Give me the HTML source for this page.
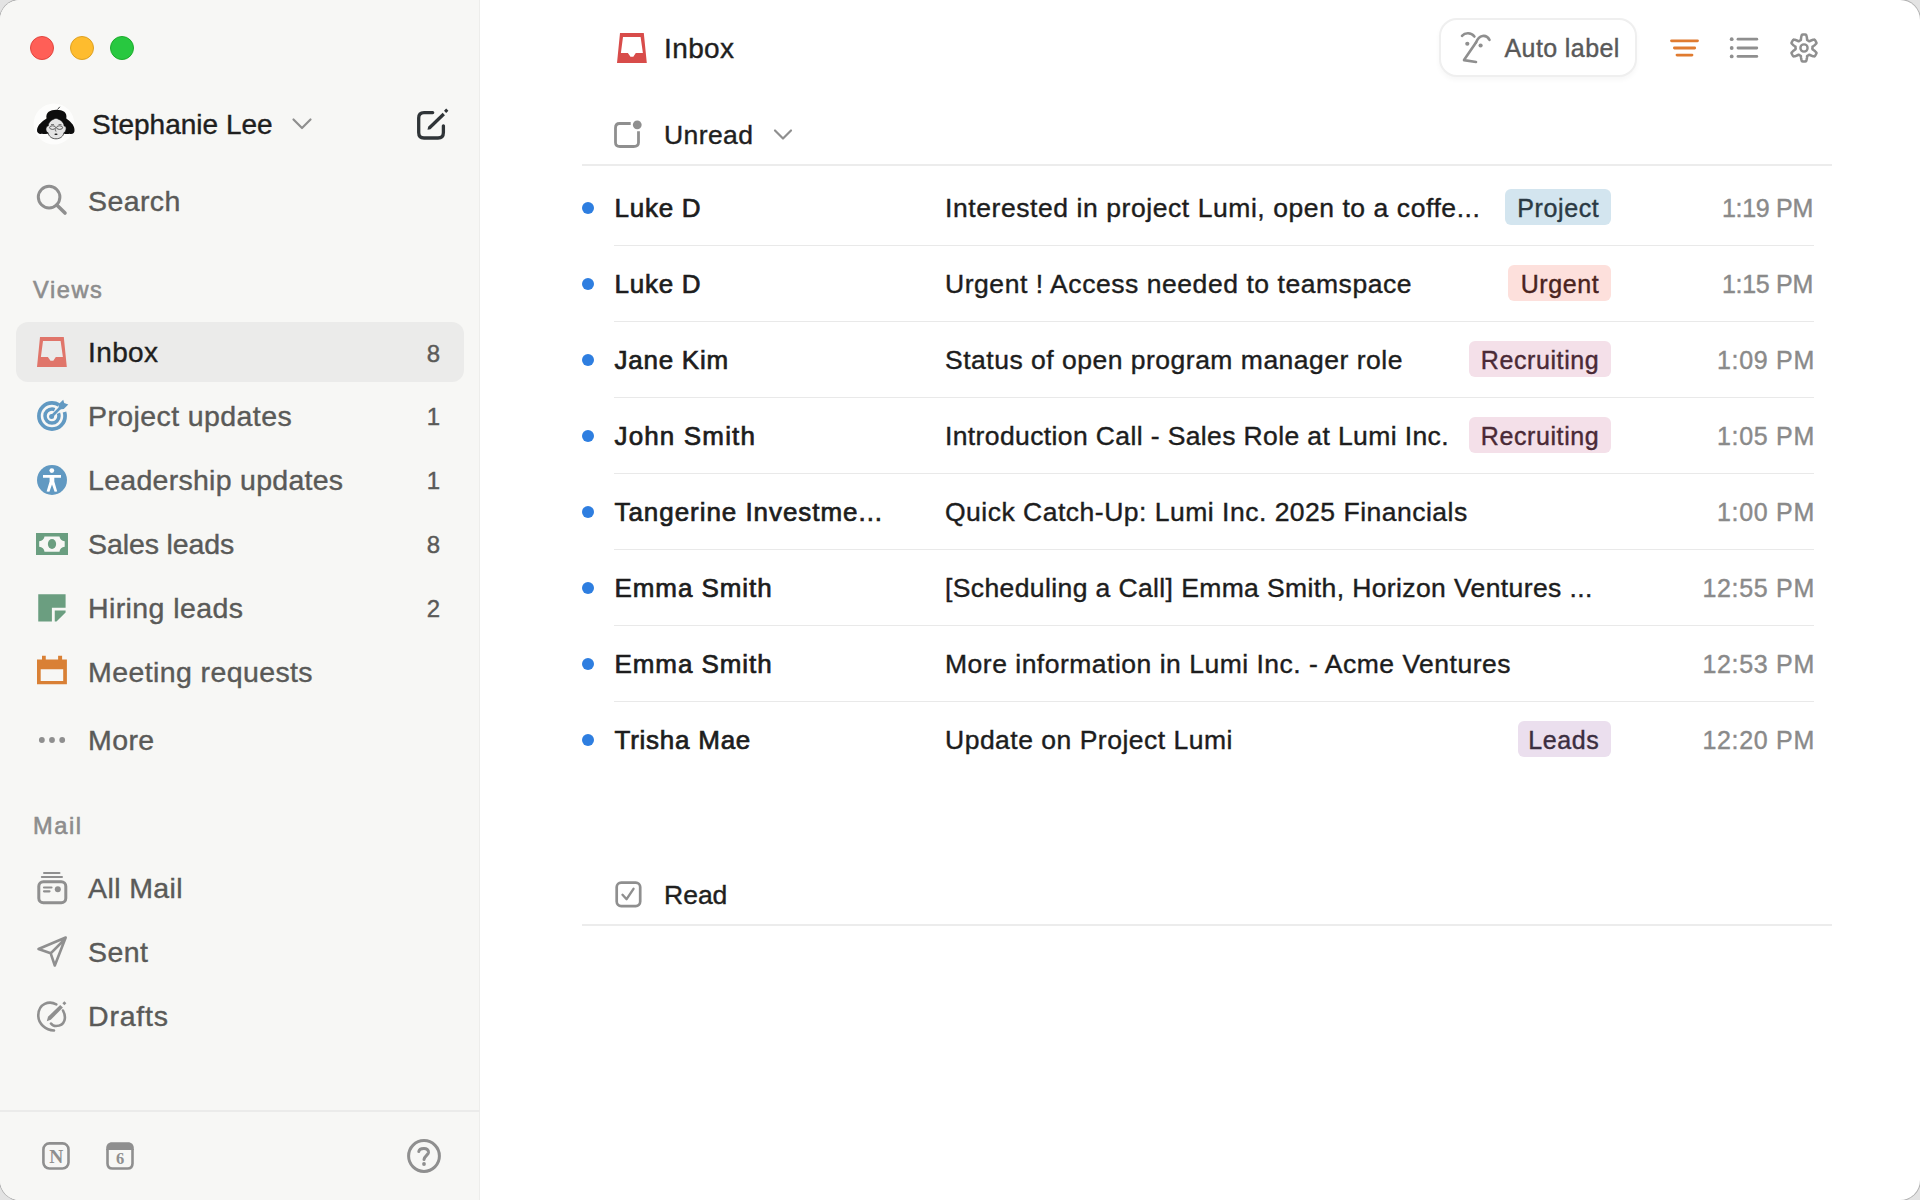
<!DOCTYPE html>
<html><head><meta charset="utf-8"><title>Inbox</title>
<style>
*{margin:0;padding:0;box-sizing:border-box}
html,body{width:1920px;height:1200px;overflow:hidden;background:#e3e3e3}
body{font-family:"Liberation Sans",sans-serif;position:relative}
.win{position:absolute;left:0;top:0;width:1920px;height:1200px;border-radius:20px;overflow:hidden;background:#fff;box-shadow:0 0 0 1px rgba(0,0,0,0.22)}
.side{position:absolute;left:0;top:0;width:480px;height:1200px;background:#f7f7f5;border-right:1px solid #ededeb}
.t{position:absolute;white-space:nowrap}
svg{position:absolute;overflow:visible}
.hl{position:absolute;left:16px;top:322px;width:448px;height:60px;border-radius:12px;background:#ebebea}
.sep{position:absolute;height:2px;background:#ececec}
.tag{position:absolute;height:36px;border-radius:6px}
</style></head><body><div class="win">
<div class="side">
<svg style="left:0;top:0" width="160" height="80"><circle cx="42" cy="48" r="11.5" fill="#ff5f57" stroke="#e2463f" stroke-width="1"/><circle cx="82" cy="48" r="11.5" fill="#febc2e" stroke="#dea123" stroke-width="1"/><circle cx="122" cy="48" r="11.5" fill="#28c840" stroke="#1dac2c" stroke-width="1"/></svg>
<svg style="left:0px;top:0px" width="100" height="160" viewBox="0 0 100 160">
<circle cx="54" cy="124" r="20.5" fill="#ffffff" opacity="0.7"/>
<path d="M37 130 C37.5 124.5 43 121 46.5 118.5 C45.5 112.5 50 109.8 56.5 109.8 C63 109.8 67.5 112.5 66.3 118.5 C69.5 121 74.5 124.5 74.5 130 C74.8 133.2 72.5 134.5 69.5 133.8 C66 134.5 64 133.5 62 133.5 L50 133.5 C48 133.5 45 134.5 42 133.8 C39 134.3 36.8 132.8 37 130 Z" fill="#0d0d0d"/>
<path d="M57.5 109.5 L59.8 106.8" stroke="#222" stroke-width="0.9"/>
<path d="M48.2 126 C48.5 121.5 52 119.5 56 118.2 C60 119.5 63.8 121.5 64.2 126 C65.8 126 66.5 127.5 66 129.5 C65.6 131.5 64.8 132.5 64 132.6 C63.2 136.5 60.2 138.8 56 138.8 C51.8 138.8 48.8 136.5 48 132.6 C47 132.5 46 131.2 45.9 129.3 C45.8 127.3 46.8 126 48.2 126 Z" fill="#e4e4e4" stroke="#111" stroke-width="0.7"/>
<ellipse cx="52.6" cy="127.6" rx="3" ry="1.8" fill="none" stroke="#333" stroke-width="0.75"/>
<ellipse cx="59.6" cy="127.6" rx="3" ry="1.8" fill="none" stroke="#333" stroke-width="0.75"/>
<path d="M51 124.5 h3 M58.5 124.5 h3" stroke="#333" stroke-width="0.6"/>
<path d="M55.8 128.5 L55.3 131 L56.5 131.2" fill="none" stroke="#444" stroke-width="0.6"/>
<ellipse cx="56" cy="134.3" rx="1.6" ry="0.8" fill="#111"/>
</svg>
<div class="t" style="left:92px;top:111.10px;font-size:28px;line-height:28px;color:#1f1f1f;font-weight:400;-webkit-text-stroke:0.4px #1f1f1f;">Stephanie Lee</div>
<svg style="left:290px;top:115px" width="24" height="20"><path d="M3.5 4.5 L12 13 L20.5 4.5" fill="none" stroke="#8f8f8f" stroke-width="2.2" stroke-linecap="round" stroke-linejoin="round"/></svg>
<svg style="left:412px;top:104px" width="40" height="40" viewBox="0 0 40 40">
<path d="M20.7 8.6 H12 C8.5 8.6 6.7 10.5 6.7 14 V28.5 C6.7 32 8.5 34 12 34 H26 C29.5 34 31.4 32 31.4 28.5 V21.8" fill="none" stroke="#2f3437" stroke-width="3.3" stroke-linecap="round"/>
<path d="M15.5 25.8 L16.15 22.82 L30.65 8.82 L32.95 11.18 L18.45 25.18 Z" fill="#2f3437"/>
<path d="M34.2 4.6 L36.4 6.8 L34.2 9 L32 6.8 Z" fill="#2f3437"/>
</svg>
<svg style="left:30px;top:175px" width="45" height="45" viewBox="0 0 45 45">
<circle cx="19.1" cy="22.1" r="10.8" fill="none" stroke="#8f8f8f" stroke-width="3"/>
<path d="M26.8 30 L35 38" stroke="#8f8f8f" stroke-width="3.6" stroke-linecap="round"/>
</svg>
<div class="t" style="left:88px;top:186.67px;font-size:28.5px;line-height:28.5px;color:#5a5a58;font-weight:400;letter-spacing:0.4px;-webkit-text-stroke:0.4px #5a5a58;">Search</div>
<div class="t" style="left:33px;top:278.82px;font-size:23.6px;line-height:23.6px;color:#8d8d8d;font-weight:400;letter-spacing:1.6px;-webkit-text-stroke:0.6px #8d8d8d;">Views</div>
<div class="hl"></div>
<svg style="left:37px;top:337px" width="30" height="30" viewBox="0 0 30 30"><path fill-rule="evenodd" fill="#e0756a" d="M3 0 H26.8 L29.8 30 H0 Z M6 4 L3.9 20 H10.9 L13.5 23.8 H16.3 L18.8 20 H25.9 L23.6 4 Z"/></svg>
<div class="t" style="left:88px;top:339.10px;font-size:28px;line-height:28px;color:#1f1f1f;font-weight:400;letter-spacing:0.4px;-webkit-text-stroke:0.4px #1f1f1f;">Inbox</div>
<div class="t" style="right:39px;top:341.68px;font-size:24px;line-height:24px;color:#5a5a58;font-weight:400;text-align:right;-webkit-text-stroke:0.4px #5a5a58;">8</div>
<svg style="left:30px;top:395px" width="45" height="45" viewBox="0 0 45 45">
<circle cx="22" cy="21" r="13.1" fill="none" stroke="#6199c2" stroke-width="3.7" stroke-dasharray="68.59 9.15 4.57 0"/>
<circle cx="22" cy="21" r="7" fill="none" stroke="#6199c2" stroke-width="3.5" stroke-dasharray="35.43 5.50 3.05 0"/>
<circle cx="21.6" cy="21.5" r="2.5" fill="#6199c2"/>
<path d="M21.6 21.5 L31 12" stroke="#6199c2" stroke-width="2.6"/>
<path d="M28.6 9.2 L33.2 4.8 L34.2 8 L38.3 9.4 L33.8 14 L28.8 14.6 Z" fill="#6199c2"/>
</svg>
<div class="t" style="left:88px;top:401.67px;font-size:28.5px;line-height:28.5px;color:#5a5a58;font-weight:400;letter-spacing:0.4px;-webkit-text-stroke:0.4px #5a5a58;">Project updates</div>
<div class="t" style="right:39px;top:404.68px;font-size:24px;line-height:24px;color:#5a5a58;font-weight:400;text-align:right;-webkit-text-stroke:0.4px #5a5a58;">1</div>
<svg style="left:37px;top:465px" width="30" height="30" viewBox="0 0 30 30">
<circle cx="15" cy="15" r="15" fill="#6199c2"/>
<circle cx="14.8" cy="5.6" r="2.4" fill="#fff"/>
<path d="M6 10 H24 V12.7 H17.3 L17.3 16.5 L20.2 26.5 L17.6 26.8 L15 19.5 L12.4 26.8 L9.6 26.5 L12.6 16.5 V12.7 H6 Z" fill="#fff"/>
</svg>
<div class="t" style="left:88px;top:465.67px;font-size:28.5px;line-height:28.5px;color:#5a5a58;font-weight:400;letter-spacing:0.28px;-webkit-text-stroke:0.4px #5a5a58;">Leadership updates</div>
<div class="t" style="right:39px;top:468.68px;font-size:24px;line-height:24px;color:#5a5a58;font-weight:400;text-align:right;-webkit-text-stroke:0.4px #5a5a58;">1</div>
<svg style="left:36px;top:533px" width="32" height="22" viewBox="0 0 32 22">
<path fill-rule="evenodd" fill="#6a9e80" d="M0 0 H32 V22 H0 Z M8.5 3.4 H23.5 C23.8 6 25.8 8 28.7 8.3 V13.8 C25.8 14.1 23.8 16.1 23.5 18.7 H8.5 C8.2 16.1 6.2 14.1 3.2 13.8 V8.3 C6.2 8 8.2 6 8.5 3.4 Z"/>
<ellipse cx="16" cy="11" rx="4.1" ry="4.9" fill="#6a9e80"/>
</svg>
<div class="t" style="left:88px;top:529.67px;font-size:28.5px;line-height:28.5px;color:#5a5a58;font-weight:400;letter-spacing:-0.1px;-webkit-text-stroke:0.4px #5a5a58;">Sales leads</div>
<div class="t" style="right:39px;top:532.68px;font-size:24px;line-height:24px;color:#5a5a58;font-weight:400;text-align:right;-webkit-text-stroke:0.4px #5a5a58;">8</div>
<svg style="left:38px;top:594px" width="28" height="28" viewBox="0 0 28 28">
<path fill="#6b9e80" d="M0.25 0.25 H27.6 V13.7 H13.9 V27.6 H0.25 Z"/>
<path fill="#6b9e80" d="M16.75 16.6 H27.6 V18.5 L18.5 27.6 H16.75 Z"/>
</svg>
<div class="t" style="left:88px;top:593.67px;font-size:28.5px;line-height:28.5px;color:#5a5a58;font-weight:400;letter-spacing:0.4px;-webkit-text-stroke:0.4px #5a5a58;">Hiring leads</div>
<div class="t" style="right:39px;top:596.68px;font-size:24px;line-height:24px;color:#5a5a58;font-weight:400;text-align:right;-webkit-text-stroke:0.4px #5a5a58;">2</div>
<svg style="left:37px;top:655px" width="30" height="30" viewBox="0 0 30 30">
<path fill-rule="evenodd" fill="#d98035" d="M0 4.4 H5 V0.8 H8.75 V4.4 H21.1 V0.8 H25.1 V4.4 H29.9 V29.3 H0 Z M3.7 14.3 V26.1 H26.2 V14.3 Z"/>
</svg>
<div class="t" style="left:88px;top:657.67px;font-size:28.5px;line-height:28.5px;color:#5a5a58;font-weight:400;letter-spacing:0.4px;-webkit-text-stroke:0.4px #5a5a58;">Meeting requests</div>
<svg style="left:36px;top:732px" width="32" height="16"><circle cx="5.85" cy="8" r="2.9" fill="#8f8f8f"/><circle cx="16" cy="8" r="2.9" fill="#8f8f8f"/><circle cx="26.2" cy="8" r="2.9" fill="#8f8f8f"/></svg>
<div class="t" style="left:88px;top:725.67px;font-size:28.5px;line-height:28.5px;color:#5a5a58;font-weight:400;letter-spacing:0.4px;-webkit-text-stroke:0.4px #5a5a58;">More</div>
<div class="t" style="left:33px;top:814.82px;font-size:23.6px;line-height:23.6px;color:#8d8d8d;font-weight:400;letter-spacing:1.6px;-webkit-text-stroke:0.6px #8d8d8d;">Mail</div>
<svg style="left:30px;top:866px" width="45" height="45" viewBox="0 0 45 45">
<g stroke="#8f8f8f" fill="none" stroke-linecap="round">
<path d="M14 7 H29.5" stroke-width="2"/>
<path d="M11.8 11 H32" stroke-width="2"/>
<rect x="8.8" y="15.7" width="27" height="21" rx="4.5" stroke-width="3"/>
<path d="M14 21.5 H21.5 M14 25.3 H19.5" stroke-width="2.2"/>
</g>
<circle cx="27.8" cy="23.2" r="3" fill="#8f8f8f"/>
</svg>
<div class="t" style="left:88px;top:874.47px;font-size:28.5px;line-height:28.5px;color:#5a5a58;font-weight:400;letter-spacing:0.4px;-webkit-text-stroke:0.4px #5a5a58;">All Mail</div>
<svg style="left:30px;top:930px" width="45" height="45" viewBox="0 0 45 45">
<path d="M35.7 7.5 L8.5 19 L20.7 23.3 L24.8 35.5 Z M20.7 23.3 L34 10" fill="none" stroke="#8f8f8f" stroke-width="2.6" stroke-linejoin="round" stroke-linecap="round"/>
</svg>
<div class="t" style="left:88px;top:938.47px;font-size:28.5px;line-height:28.5px;color:#5a5a58;font-weight:400;letter-spacing:0.4px;-webkit-text-stroke:0.4px #5a5a58;">Sent</div>
<svg style="left:30px;top:994px" width="45" height="45" viewBox="0 0 45 45">
<g fill="none" stroke="#8f8f8f" stroke-width="2.6" stroke-linecap="round">
<path d="M26.3 10.3 C19 6.5 8.7 9.5 8.3 21 C8 30 16 36 24 36.5"/>
<path d="M33 16.5 C36.5 23 35.5 32 26 32 C24 32 22 31 21 29.5"/>
</g>
<path d="M16.8 27.2 L18 22.8 L30.2 10.9 L32.9 13.6 L20.8 25.8 Z" fill="#8f8f8f"/>
<path d="M34.4 7.3 L36.4 9.3 L34.4 11.3 L32.4 9.3 Z" fill="#8f8f8f"/>
</svg>
<div class="t" style="left:88px;top:1002.47px;font-size:28.5px;line-height:28.5px;color:#5a5a58;font-weight:400;letter-spacing:0.8px;-webkit-text-stroke:0.4px #5a5a58;">Drafts</div>
<div class="sep" style="left:0;top:1110px;width:480px;height:2px;background:#ebebea"></div>
<svg style="left:40px;top:1140px" width="32" height="32" viewBox="0 0 32 32">
<rect x="3.4" y="3.4" width="25.1" height="25.1" rx="6" fill="none" stroke="#8f8f8f" stroke-width="2.6"/>
<text x="16.2" y="22.9" text-anchor="middle" font-family="Liberation Serif" font-weight="700" font-size="19.5" fill="#8f8f8f">N</text>
</svg>
<svg style="left:104px;top:1140px" width="32" height="32" viewBox="0 0 32 32">
<path d="M3.5 9 V23.5 C3.5 26.5 5 28.5 8.5 28.5 H23.5 C27 28.5 28.5 26.5 28.5 23.5 V9" fill="none" stroke="#8f8f8f" stroke-width="2.6"/>
<path d="M2.2 10 V8 C2.2 4.5 4.5 2.2 8 2.2 H24 C27.5 2.2 29.8 4.5 29.8 8 V10 Z" fill="#8f8f8f"/>
<text x="16.2" y="24.4" text-anchor="middle" font-family="Liberation Serif" font-weight="700" font-size="16.5" fill="#8f8f8f">6</text>
</svg>
<svg style="left:404px;top:1136px" width="40" height="40" viewBox="0 0 40 40">
<circle cx="20" cy="20" r="15.4" fill="none" stroke="#8f8f8f" stroke-width="3"/>
<path d="M14.8 15.5 C15.5 11.5 25 11 24.5 16.5 C24.2 19 20.5 20 20 23.5" fill="none" stroke="#8f8f8f" stroke-width="3" stroke-linecap="round"/>
<circle cx="20" cy="28" r="1.9" fill="#8f8f8f"/>
</svg>
</div>
<svg style="left:617px;top:33px" width="30" height="30" viewBox="0 0 30 30"><path fill-rule="evenodd" fill="#d84c4a" d="M3 0 H26.8 L29.8 30 H0 Z M6 4 L3.9 20 H10.9 L13.5 23.8 H16.3 L18.8 20 H25.9 L23.6 4 Z"/></svg>
<div class="t" style="left:664px;top:35.10px;font-size:28px;line-height:28px;color:#1f1f1f;font-weight:400;letter-spacing:0.4px;-webkit-text-stroke:0.4px #1f1f1f;">Inbox</div>
<div style="position:absolute;left:1439px;top:18px;width:198px;height:59px;border:2px solid #efefef;border-radius:18px;background:#fff;box-shadow:0 3px 5px rgba(0,0,0,0.035)"></div>
<svg style="left:1440px;top:20px" width="60" height="60" viewBox="0 0 60 60">
<g fill="none" stroke="#8f8f8f" stroke-width="2.6" stroke-linecap="round" stroke-linejoin="round">
<path d="M22 15.8 C25 12.5 31 12.2 34.4 16.5"/>
<path d="M36 22.4 C39 15 46 13.5 49.5 19.8"/>
<path d="M36 22.4 L24 40.1 L36 42"/>
</g>
<circle cx="27.3" cy="23.75" r="2.1" fill="#8f8f8f"/>
<circle cx="40.6" cy="25.5" r="2.1" fill="#8f8f8f"/>
</svg>
<div class="t" style="left:1504.5px;top:35.74px;font-size:25px;line-height:25px;color:#595959;font-weight:400;letter-spacing:0.4px;-webkit-text-stroke:0.4px #595959;">Auto label</div>
<svg style="left:1665px;top:33px" width="40" height="30"><g stroke="#e07b30" stroke-width="2.8" stroke-linecap="round"><path d="M6.5 7.8 H32.5"/><path d="M9.4 15 H29.7"/><path d="M12 22.1 H27"/></g></svg>
<svg style="left:1725px;top:33px" width="40" height="30"><g fill="#8f8f8f"><circle cx="6.7" cy="6.2" r="1.9"/><circle cx="6.7" cy="15" r="1.9"/><circle cx="6.7" cy="23.4" r="1.9"/></g><g stroke="#8f8f8f" stroke-width="2.8" stroke-linecap="round"><path d="M13 6.2 H31.8"/><path d="M13 15 H31.8"/><path d="M13 23.4 H31.8"/></g></svg>
<svg style="left:1784px;top:27.8px" width="40" height="40" viewBox="0 0 40 40"><path d="M28.50 20.00 L28.50 20.22 L28.49 20.44 L28.47 20.67 L28.45 20.89 L28.43 21.11 L28.54 21.35 L29.03 21.67 L29.55 22.03 L30.09 22.42 L30.63 22.85 L31.15 23.30 L31.64 23.78 L32.08 24.28 L32.46 24.78 L32.47 25.17 L32.33 25.49 L32.18 25.81 L32.03 26.13 L31.86 26.44 L31.69 26.75 L31.51 27.05 L31.32 27.35 L31.13 27.65 L30.92 27.94 L30.71 28.22 L30.38 28.40 L29.75 28.32 L29.09 28.19 L28.43 28.00 L27.78 27.78 L27.14 27.53 L26.53 27.26 L25.96 26.98 L25.44 26.72 L25.17 26.74 L25.00 26.88 L24.81 27.01 L24.63 27.13 L24.44 27.25 L24.25 27.36 L24.06 27.47 L23.86 27.57 L23.66 27.67 L23.46 27.77 L23.25 27.85 L23.10 28.07 L23.07 28.66 L23.02 29.29 L22.95 29.95 L22.85 30.63 L22.71 31.30 L22.54 31.97 L22.34 32.60 L22.09 33.19 L21.76 33.38 L21.41 33.43 L21.06 33.46 L20.71 33.48 L20.35 33.50 L20.00 33.50 L19.65 33.50 L19.29 33.48 L18.94 33.46 L18.59 33.43 L18.24 33.38 L17.91 33.19 L17.66 32.60 L17.46 31.97 L17.29 31.30 L17.15 30.63 L17.05 29.95 L16.98 29.29 L16.93 28.66 L16.90 28.07 L16.75 27.85 L16.54 27.77 L16.34 27.67 L16.14 27.57 L15.94 27.47 L15.75 27.36 L15.56 27.25 L15.37 27.13 L15.19 27.01 L15.00 26.88 L14.83 26.74 L14.56 26.72 L14.04 26.98 L13.47 27.26 L12.86 27.53 L12.22 27.78 L11.57 28.00 L10.91 28.19 L10.25 28.32 L9.62 28.40 L9.29 28.22 L9.08 27.94 L8.87 27.65 L8.68 27.35 L8.49 27.05 L8.31 26.75 L8.14 26.44 L7.97 26.13 L7.82 25.81 L7.67 25.49 L7.53 25.17 L7.54 24.78 L7.92 24.28 L8.36 23.78 L8.85 23.30 L9.37 22.85 L9.91 22.42 L10.45 22.03 L10.97 21.67 L11.46 21.35 L11.57 21.11 L11.55 20.89 L11.53 20.67 L11.51 20.44 L11.50 20.22 L11.50 20.00 L11.50 19.78 L11.51 19.56 L11.53 19.33 L11.55 19.11 L11.57 18.89 L11.46 18.65 L10.97 18.33 L10.45 17.97 L9.91 17.58 L9.37 17.15 L8.85 16.70 L8.36 16.22 L7.92 15.72 L7.54 15.22 L7.53 14.83 L7.67 14.51 L7.82 14.19 L7.97 13.87 L8.14 13.56 L8.31 13.25 L8.49 12.95 L8.68 12.65 L8.87 12.35 L9.08 12.06 L9.29 11.78 L9.62 11.60 L10.25 11.68 L10.91 11.81 L11.57 12.00 L12.22 12.22 L12.86 12.47 L13.47 12.74 L14.04 13.02 L14.56 13.28 L14.83 13.26 L15.00 13.12 L15.19 12.99 L15.37 12.87 L15.56 12.75 L15.75 12.64 L15.94 12.53 L16.14 12.43 L16.34 12.33 L16.54 12.23 L16.75 12.15 L16.90 11.93 L16.93 11.34 L16.98 10.71 L17.05 10.05 L17.15 9.37 L17.29 8.70 L17.46 8.03 L17.66 7.40 L17.91 6.81 L18.24 6.62 L18.59 6.57 L18.94 6.54 L19.29 6.52 L19.65 6.50 L20.00 6.50 L20.35 6.50 L20.71 6.52 L21.06 6.54 L21.41 6.57 L21.76 6.62 L22.09 6.81 L22.34 7.40 L22.54 8.03 L22.71 8.70 L22.85 9.37 L22.95 10.05 L23.02 10.71 L23.07 11.34 L23.10 11.93 L23.25 12.15 L23.46 12.23 L23.66 12.33 L23.86 12.43 L24.06 12.53 L24.25 12.64 L24.44 12.75 L24.63 12.87 L24.81 12.99 L25.00 13.12 L25.17 13.26 L25.44 13.28 L25.96 13.02 L26.53 12.74 L27.14 12.47 L27.78 12.22 L28.43 12.00 L29.09 11.81 L29.75 11.68 L30.38 11.60 L30.71 11.78 L30.92 12.06 L31.13 12.35 L31.32 12.65 L31.51 12.95 L31.69 13.25 L31.86 13.56 L32.03 13.87 L32.18 14.19 L32.33 14.51 L32.47 14.83 L32.46 15.22 L32.08 15.72 L31.64 16.22 L31.15 16.70 L30.63 17.15 L30.09 17.58 L29.55 17.97 L29.03 18.33 L28.54 18.65 L28.43 18.89 L28.45 19.11 L28.47 19.33 L28.49 19.56 L28.50 19.78 L28.50 20.00Z" fill="none" stroke="#8f8f8f" stroke-width="2.5" stroke-linejoin="round"/><circle cx="20" cy="20" r="3.6" fill="none" stroke="#8f8f8f" stroke-width="2.4"/></svg>
<svg style="left:605px;top:110px" width="45" height="45" viewBox="0 0 45 45">
<path d="M25.7 13.5 H14.5 C11.5 13.5 10.5 15 10.5 18 V32.5 C10.5 35.5 12 36.5 15 36.5 H28.5 C31.5 36.5 33.5 35.5 33.5 32.5 V21.2" fill="none" stroke="#8f8f8f" stroke-width="2.8"/>
<circle cx="32.25" cy="14.8" r="4.4" fill="#8f8f8f"/>
</svg>
<div class="t" style="left:664px;top:121.57px;font-size:26.5px;line-height:26.5px;color:#1f1f1f;font-weight:400;letter-spacing:0.4px;-webkit-text-stroke:0.4px #1f1f1f;">Unread</div>
<svg style="left:770px;top:125px" width="26" height="20"><path d="M5 5.5 L13 13.5 L21 5.5" fill="none" stroke="#8f8f8f" stroke-width="2.2" stroke-linecap="round" stroke-linejoin="round"/></svg>
<div class="sep" style="left:582px;top:164px;width:1250px"></div>
<svg style="left:581px;top:201px" width="14" height="14"><circle cx="7" cy="7" r="6" fill="#2e7ee0"/></svg>
<div class="t" style="left:614.5px;top:194.99px;font-size:26px;line-height:26px;color:#1d1d1d;font-weight:400;letter-spacing:0.75px;-webkit-text-stroke:0.7px #1d1d1d;">Luke D</div>
<div class="t" style="left:945px;top:194.57px;font-size:26.5px;line-height:26.5px;color:#1d1d1d;font-weight:400;letter-spacing:0.57px;-webkit-text-stroke:0.4px #1d1d1d;">Interested in project Lumi, open to a coffe...</div>
<div class="tag" style="left:1505px;top:189px;width:106px;background:#d3e5ef"></div>
<div class="t" style="right:320.70000000000005px;top:195.84px;font-size:25px;line-height:25px;color:#2b3a44;font-weight:400;text-align:right;letter-spacing:0.6px;-webkit-text-stroke:0.4px #2b3a44;">Project</div>
<div class="t" style="right:107px;top:195.84px;font-size:25px;line-height:25px;color:#8a8a8a;font-weight:400;text-align:right;letter-spacing:-0.3px;-webkit-text-stroke:0.4px #8a8a8a;">1:19 PM</div>
<div class="sep" style="left:614px;top:245px;width:1200px;height:1px;background:#e9e9e9"></div>
<svg style="left:581px;top:277px" width="14" height="14"><circle cx="7" cy="7" r="6" fill="#2e7ee0"/></svg>
<div class="t" style="left:614.5px;top:270.99px;font-size:26px;line-height:26px;color:#1d1d1d;font-weight:400;letter-spacing:0.75px;-webkit-text-stroke:0.7px #1d1d1d;">Luke D</div>
<div class="t" style="left:945px;top:270.57px;font-size:26.5px;line-height:26.5px;color:#1d1d1d;font-weight:400;letter-spacing:0.55px;-webkit-text-stroke:0.4px #1d1d1d;">Urgent ! Access needed to teamspace</div>
<div class="tag" style="left:1508px;top:265px;width:103px;background:#fde0dc"></div>
<div class="t" style="right:320.70000000000005px;top:271.84px;font-size:25px;line-height:25px;color:#4a2420;font-weight:400;text-align:right;letter-spacing:0.6px;-webkit-text-stroke:0.4px #4a2420;">Urgent</div>
<div class="t" style="right:107px;top:271.84px;font-size:25px;line-height:25px;color:#8a8a8a;font-weight:400;text-align:right;letter-spacing:-0.3px;-webkit-text-stroke:0.4px #8a8a8a;">1:15 PM</div>
<div class="sep" style="left:614px;top:321px;width:1200px;height:1px;background:#e9e9e9"></div>
<svg style="left:581px;top:353px" width="14" height="14"><circle cx="7" cy="7" r="6" fill="#2e7ee0"/></svg>
<div class="t" style="left:614.5px;top:346.99px;font-size:26px;line-height:26px;color:#1d1d1d;font-weight:400;letter-spacing:0.75px;-webkit-text-stroke:0.7px #1d1d1d;">Jane Kim</div>
<div class="t" style="left:945px;top:346.57px;font-size:26.5px;line-height:26.5px;color:#1d1d1d;font-weight:400;letter-spacing:0.5px;-webkit-text-stroke:0.4px #1d1d1d;">Status of open program manager role</div>
<div class="tag" style="left:1469px;top:341px;width:142px;background:#f4e0e9"></div>
<div class="t" style="right:320.70000000000005px;top:347.84px;font-size:25px;line-height:25px;color:#4a2a36;font-weight:400;text-align:right;letter-spacing:0.6px;-webkit-text-stroke:0.4px #4a2a36;">Recruiting</div>
<div class="t" style="right:105px;top:347.84px;font-size:25px;line-height:25px;color:#8a8a8a;font-weight:400;text-align:right;letter-spacing:0.7px;-webkit-text-stroke:0.4px #8a8a8a;">1:09 PM</div>
<div class="sep" style="left:614px;top:397px;width:1200px;height:1px;background:#e9e9e9"></div>
<svg style="left:581px;top:429px" width="14" height="14"><circle cx="7" cy="7" r="6" fill="#2e7ee0"/></svg>
<div class="t" style="left:614.5px;top:422.99px;font-size:26px;line-height:26px;color:#1d1d1d;font-weight:400;letter-spacing:1.15px;-webkit-text-stroke:0.7px #1d1d1d;">John Smith</div>
<div class="t" style="left:945px;top:422.57px;font-size:26.5px;line-height:26.5px;color:#1d1d1d;font-weight:400;letter-spacing:0.38px;-webkit-text-stroke:0.4px #1d1d1d;">Introduction Call - Sales Role at Lumi Inc.</div>
<div class="tag" style="left:1469px;top:417px;width:142px;background:#f4e0e9"></div>
<div class="t" style="right:320.70000000000005px;top:423.84px;font-size:25px;line-height:25px;color:#4a2a36;font-weight:400;text-align:right;letter-spacing:0.6px;-webkit-text-stroke:0.4px #4a2a36;">Recruiting</div>
<div class="t" style="right:105px;top:423.84px;font-size:25px;line-height:25px;color:#8a8a8a;font-weight:400;text-align:right;letter-spacing:0.7px;-webkit-text-stroke:0.4px #8a8a8a;">1:05 PM</div>
<div class="sep" style="left:614px;top:473px;width:1200px;height:1px;background:#e9e9e9"></div>
<svg style="left:581px;top:505px" width="14" height="14"><circle cx="7" cy="7" r="6" fill="#2e7ee0"/></svg>
<div class="t" style="left:614.5px;top:498.99px;font-size:26px;line-height:26px;color:#1d1d1d;font-weight:400;letter-spacing:0.95px;-webkit-text-stroke:0.7px #1d1d1d;">Tangerine Investme...</div>
<div class="t" style="left:945px;top:498.57px;font-size:26.5px;line-height:26.5px;color:#1d1d1d;font-weight:400;letter-spacing:0.5px;-webkit-text-stroke:0.4px #1d1d1d;">Quick Catch-Up: Lumi Inc. 2025 Financials</div>
<div class="t" style="right:105px;top:499.84px;font-size:25px;line-height:25px;color:#8a8a8a;font-weight:400;text-align:right;letter-spacing:0.7px;-webkit-text-stroke:0.4px #8a8a8a;">1:00 PM</div>
<div class="sep" style="left:614px;top:549px;width:1200px;height:1px;background:#e9e9e9"></div>
<svg style="left:581px;top:581px" width="14" height="14"><circle cx="7" cy="7" r="6" fill="#2e7ee0"/></svg>
<div class="t" style="left:614.5px;top:574.99px;font-size:26px;line-height:26px;color:#1d1d1d;font-weight:400;letter-spacing:0.93px;-webkit-text-stroke:0.7px #1d1d1d;">Emma Smith</div>
<div class="t" style="left:945px;top:574.57px;font-size:26.5px;line-height:26.5px;color:#1d1d1d;font-weight:400;letter-spacing:0.39px;-webkit-text-stroke:0.4px #1d1d1d;">[Scheduling a Call] Emma Smith, Horizon Ventures ...</div>
<div class="t" style="right:105px;top:575.84px;font-size:25px;line-height:25px;color:#8a8a8a;font-weight:400;text-align:right;letter-spacing:0.7px;-webkit-text-stroke:0.4px #8a8a8a;">12:55 PM</div>
<div class="sep" style="left:614px;top:625px;width:1200px;height:1px;background:#e9e9e9"></div>
<svg style="left:581px;top:657px" width="14" height="14"><circle cx="7" cy="7" r="6" fill="#2e7ee0"/></svg>
<div class="t" style="left:614.5px;top:650.99px;font-size:26px;line-height:26px;color:#1d1d1d;font-weight:400;letter-spacing:0.93px;-webkit-text-stroke:0.7px #1d1d1d;">Emma Smith</div>
<div class="t" style="left:945px;top:650.57px;font-size:26.5px;line-height:26.5px;color:#1d1d1d;font-weight:400;letter-spacing:0.5px;-webkit-text-stroke:0.4px #1d1d1d;">More information in Lumi Inc. - Acme Ventures</div>
<div class="t" style="right:105px;top:651.84px;font-size:25px;line-height:25px;color:#8a8a8a;font-weight:400;text-align:right;letter-spacing:0.7px;-webkit-text-stroke:0.4px #8a8a8a;">12:53 PM</div>
<div class="sep" style="left:614px;top:701px;width:1200px;height:1px;background:#e9e9e9"></div>
<svg style="left:581px;top:733px" width="14" height="14"><circle cx="7" cy="7" r="6" fill="#2e7ee0"/></svg>
<div class="t" style="left:614.5px;top:726.99px;font-size:26px;line-height:26px;color:#1d1d1d;font-weight:400;letter-spacing:0.75px;-webkit-text-stroke:0.7px #1d1d1d;">Trisha Mae</div>
<div class="t" style="left:945px;top:726.57px;font-size:26.5px;line-height:26.5px;color:#1d1d1d;font-weight:400;letter-spacing:0.5px;-webkit-text-stroke:0.4px #1d1d1d;">Update on Project Lumi</div>
<div class="tag" style="left:1518px;top:721px;width:93px;background:#ebdfee"></div>
<div class="t" style="right:320.70000000000005px;top:727.84px;font-size:25px;line-height:25px;color:#3b2e40;font-weight:400;text-align:right;letter-spacing:0.6px;-webkit-text-stroke:0.4px #3b2e40;">Leads</div>
<div class="t" style="right:105px;top:727.84px;font-size:25px;line-height:25px;color:#8a8a8a;font-weight:400;text-align:right;letter-spacing:0.7px;-webkit-text-stroke:0.4px #8a8a8a;">12:20 PM</div>
<svg style="left:605px;top:870px" width="45" height="45" viewBox="0 0 45 45">
<rect x="11.7" y="12.6" width="23.5" height="23.5" rx="4.5" fill="none" stroke="#8f8f8f" stroke-width="2.7"/>
<path d="M17.5 24.8 L21.6 29.2 L28.5 18.8" fill="none" stroke="#8f8f8f" stroke-width="2.4" stroke-linecap="round" stroke-linejoin="round"/>
</svg>
<div class="t" style="left:664px;top:881.57px;font-size:26.5px;line-height:26.5px;color:#1f1f1f;font-weight:400;-webkit-text-stroke:0.4px #1f1f1f;">Read</div>
<div class="sep" style="left:582px;top:924px;width:1250px"></div>
</div></body></html>
